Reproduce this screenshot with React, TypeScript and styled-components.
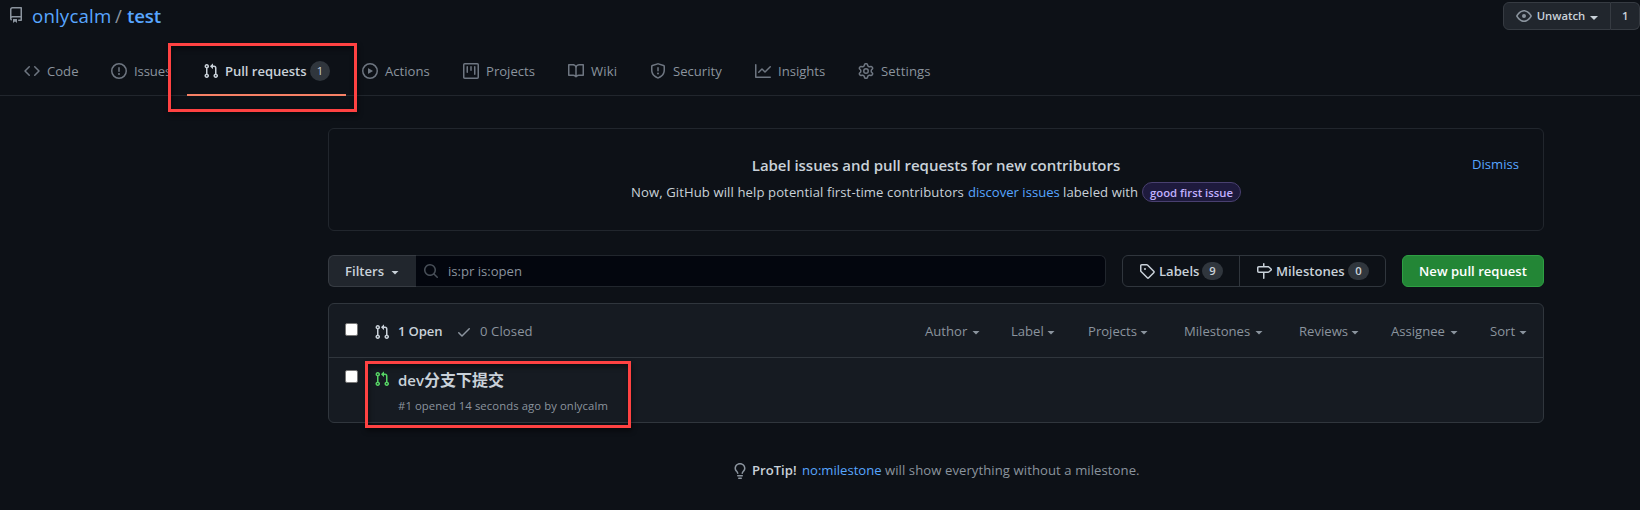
import React from "react";
import styled, { createGlobalStyle } from "styled-components";

const GlobalStyle = createGlobalStyle`
  * { box-sizing: border-box; }
  html, body { margin: 0; background: #0d1117; }
  body {
    height: 510px;
    overflow: hidden;
    color: #c9d1d9;
    font-family: "Open Sans", "Noto Sans", "Noto Sans CJK SC", sans-serif;
    font-size: 13.1px;
    line-height: 20px;
  }
`;

const paths = {
  repo: "M2 2.5A2.5 2.5 0 014.5 0h8.75a.75.75 0 01.75.75v12.5a.75.75 0 01-.75.75h-2.5a.75.75 0 110-1.5h1.75v-2h-8a1 1 0 00-.714 1.7.75.75 0 01-1.072 1.05A2.495 2.495 0 012 11.5v-9zm10.5-1V9h-8c-.356 0-.694.074-1 .208V2.5a1 1 0 011-1h8zM5 12.25v3.25a.25.25 0 00.4.2l1.45-1.087a.25.25 0 01.3 0L8.6 15.7a.25.25 0 00.4-.2v-3.25a.25.25 0 00-.25-.25h-3.5a.25.25 0 00-.25.25z",
  code: "M4.72 3.22a.75.75 0 011.06 1.06L2.06 8l3.72 3.72a.75.75 0 11-1.06 1.06L.47 8.53a.75.75 0 010-1.06l4.25-4.25zm6.56 0a.75.75 0 10-1.06 1.06L13.94 8l-3.72 3.72a.75.75 0 101.06 1.06l4.25-4.25a.75.75 0 000-1.06l-4.25-4.25z",
  issue: "M8 1.5a6.5 6.5 0 100 13 6.5 6.5 0 000-13zM0 8a8 8 0 1116 0A8 8 0 010 8zm9 3a1 1 0 11-2 0 1 1 0 012 0zm-.25-6.25a.75.75 0 00-1.5 0v3.5a.75.75 0 001.5 0v-3.5z",
  pull: "M7.177 3.073L9.573.677A.25.25 0 0110 .854v4.792a.25.25 0 01-.427.177L7.177 3.427a.25.25 0 010-.354zM3.75 2.5a.75.75 0 100 1.5.75.75 0 000-1.5zm-2.25.75a2.25 2.25 0 113 2.122v5.256a2.251 2.251 0 11-1.5 0V5.372A2.25 2.25 0 011.5 3.25zM11 2.5h-1V4h1a1 1 0 011 1v5.628a2.251 2.251 0 101.5 0V5A2.5 2.5 0 0011 2.5zm1 10.25a.75.75 0 111.5 0 .75.75 0 01-1.5 0zM3.75 12a.75.75 0 100 1.5.75.75 0 000-1.5z",
  play: "M1.5 8a6.5 6.5 0 1113 0 6.5 6.5 0 01-13 0zM8 0a8 8 0 100 16A8 8 0 008 0zM6.379 5.227A.25.25 0 006 5.442v5.117a.25.25 0 00.379.214l4.264-2.559a.25.25 0 000-.428L6.379 5.227z",
  project: "M1.75 0A1.75 1.75 0 000 1.75v12.5C0 15.216.784 16 1.75 16h12.5A1.75 1.75 0 0016 14.25V1.75A1.75 1.75 0 0014.25 0H1.75zM1.5 1.75a.25.25 0 01.25-.25h12.5a.25.25 0 01.25.25v12.5a.25.25 0 01-.25.25H1.75a.25.25 0 01-.25-.25V1.75zM11.75 3a.75.75 0 00-.75.75v7.5a.75.75 0 001.5 0v-7.5a.75.75 0 00-.75-.75zm-8.25.75a.75.75 0 011.5 0v5.5a.75.75 0 01-1.5 0v-5.5zM8 3a.75.75 0 00-.75.75v3.5a.75.75 0 001.5 0v-3.5A.75.75 0 008 3z",
  book: "M0 1.75A.75.75 0 01.75 1h4.253c1.227 0 2.317.59 3 1.501A3.744 3.744 0 0111.006 1h4.245a.75.75 0 01.75.75v10.5a.75.75 0 01-.75.75h-4.507a2.25 2.25 0 00-1.591.659l-.622.621a.75.75 0 01-1.06 0l-.622-.621A2.25 2.25 0 005.258 13H.75a.75.75 0 01-.75-.75V1.75zm8.755 3a2.25 2.25 0 012.25-2.25H14.5v9h-3.757c-.71 0-1.4.201-1.992.572l.004-7.322zm-1.504 7.324l.004-5.073-.002-2.253A2.25 2.25 0 005.003 2.5H1.5v9h3.757a3.75 3.75 0 011.994.574z",
  shield: "M7.467.133a1.75 1.75 0 011.066 0l5.25 1.68A1.75 1.75 0 0115 3.48V7c0 1.566-.32 3.182-1.303 4.682-.983 1.498-2.585 2.813-5.032 3.855a1.7 1.7 0 01-1.33 0c-2.447-1.042-4.049-2.357-5.032-3.855C1.32 10.182 1 8.566 1 7V3.48a1.75 1.75 0 011.217-1.667l5.25-1.68zm.61 1.429a.25.25 0 00-.153 0l-5.25 1.68a.25.25 0 00-.174.238V7c0 1.358.275 2.666 1.057 3.86.784 1.194 2.121 2.34 4.366 3.297a.2.2 0 00.154 0c2.245-.956 3.582-2.104 4.366-3.298C13.225 9.666 13.5 8.36 13.5 7V3.48a.25.25 0 00-.174-.237l-5.25-1.68zM9 10.5a1 1 0 11-2 0 1 1 0 012 0zm-.25-5.75a.75.75 0 10-1.5 0v3a.75.75 0 001.5 0v-3z",
  graph: "M1.5 1.75a.75.75 0 00-1.5 0v12.5c0 .414.336.75.75.75h14.5a.75.75 0 000-1.5H1.5V1.75zm14.28 2.53a.75.75 0 00-1.06-1.06L10 7.94 7.53 5.47a.75.75 0 00-1.06 0L3.22 8.72a.75.75 0 001.06 1.06L7 7.06l2.47 2.47a.75.75 0 001.06 0l5.25-5.25z",
  gear: "M7.429 1.525a6.593 6.593 0 011.142 0c.036.003.108.036.137.146l.289 1.105c.147.56.55.967.997 1.189.174.086.341.183.501.29.417.278.97.423 1.53.27l1.102-.303c.11-.03.175.016.195.046.219.31.41.641.573.989.014.031.022.11-.059.19l-.815.806c-.411.406-.562.957-.53 1.456a4.588 4.588 0 010 .582c-.032.499.119 1.05.53 1.456l.815.806c.08.08.073.159.059.19a6.494 6.494 0 01-.573.99c-.02.029-.086.074-.195.045l-1.103-.303c-.559-.153-1.112-.008-1.529.27-.16.107-.327.204-.5.29-.449.222-.851.628-.998 1.189l-.289 1.105c-.029.11-.101.143-.137.146a6.613 6.613 0 01-1.142 0c-.036-.003-.108-.037-.137-.146l-.289-1.105c-.147-.56-.55-.967-.997-1.189a4.502 4.502 0 01-.501-.29c-.417-.278-.97-.423-1.53-.27l-1.102.303c-.11.03-.175-.016-.195-.046a6.492 6.492 0 01-.573-.989c-.014-.031-.022-.11.059-.19l.815-.806c.411-.406.562-.957.53-1.456a4.587 4.587 0 010-.582c.032-.499-.119-1.05-.53-1.456l-.815-.806c-.08-.08-.073-.159-.059-.19a6.44 6.44 0 01.573-.99c.02-.029.086-.075.195-.045l1.103.303c.559.153 1.112.008 1.529-.27.16-.107.327-.204.5-.29.449-.222.851-.628.998-1.189l.289-1.105c.029-.11.101-.143.137-.146zM8 0c-.236 0-.47.01-.701.03-.743.065-1.29.615-1.458 1.261l-.29 1.106c-.017.066-.078.158-.211.224a5.994 5.994 0 00-.668.386c-.123.082-.233.09-.3.071L3.27 2.776c-.644-.177-1.392.02-1.82.63a7.977 7.977 0 00-.704 1.217c-.315.675-.111 1.422.363 1.891l.815.806c.05.048.098.147.088.294a6.084 6.084 0 000 .772c.01.147-.038.246-.088.294l-.815.806c-.474.469-.678 1.216-.363 1.891.2.428.436.835.704 1.218.428.609 1.176.806 1.82.63l1.103-.303c.066-.019.176-.011.299.071.213.143.436.272.668.386.133.066.194.158.212.224l.289 1.106c.169.646.715 1.196 1.458 1.26a8.094 8.094 0 001.402 0c.743-.064 1.29-.614 1.458-1.26l.29-1.106c.017-.066.078-.158.211-.224a5.98 5.98 0 00.668-.386c.123-.082.233-.09.3-.071l1.102.302c.644.177 1.392-.02 1.82-.63.268-.382.505-.789.704-1.217.315-.675.111-1.422-.364-1.891l-.814-.806c-.05-.048-.098-.147-.088-.294a6.1 6.1 0 000-.772c-.01-.147.039-.246.088-.294l.814-.806c.475-.469.679-1.216.364-1.891a7.992 7.992 0 00-.704-1.218c-.428-.609-1.176-.806-1.82-.63l-1.103.303c-.066.019-.176.011-.299-.071a5.991 5.991 0 00-.668-.386c-.133-.066-.194-.158-.212-.224L10.16 1.29C9.99.645 9.444.095 8.701.031A8.094 8.094 0 008 0zm1.5 8a1.5 1.5 0 11-3 0 1.5 1.5 0 013 0zM11 8a3 3 0 11-6 0 3 3 0 016 0z",
  eye: "M1.679 7.932c.412-.621 1.242-1.75 2.366-2.717C5.175 4.242 6.527 3.5 8 3.5c1.473 0 2.824.742 3.955 1.715 1.124.967 1.954 2.096 2.366 2.717a.119.119 0 010 .136c-.412.621-1.242 1.75-2.366 2.717C10.825 11.758 9.473 12.5 8 12.5c-1.473 0-2.824-.742-3.955-1.715C2.92 9.818 2.09 8.69 1.679 8.068a.119.119 0 010-.136zM8 2c-1.981 0-3.67.992-4.933 2.078C1.797 5.169.88 6.423.43 7.1a1.619 1.619 0 000 1.798c.45.678 1.367 1.932 2.637 3.024C4.329 13.008 6.019 14 8 14c1.981 0 3.67-.992 4.933-2.078 1.27-1.091 2.187-2.345 2.637-3.023a1.619 1.619 0 000-1.798c-.45-.678-1.367-1.932-2.637-3.023C11.671 2.992 9.981 2 8 2zm0 8a2 2 0 100-4 2 2 0 000 4z",
  search: "M11.5 7a4.499 4.499 0 11-8.998 0A4.499 4.499 0 0111.5 7zm-.82 4.74a6 6 0 111.06-1.06l3.04 3.04a.75.75 0 11-1.06 1.06l-3.04-3.04z",
  tag: "M2.5 7.775V2.75a.25.25 0 01.25-.25h5.025a.25.25 0 01.177.073l6.25 6.25a.25.25 0 010 .354l-5.025 5.025a.25.25 0 01-.354 0l-6.25-6.25a.25.25 0 01-.073-.177zm-1.5 0V2.75C1 1.784 1.784 1 2.75 1h5.025c.464 0 .91.184 1.238.513l6.25 6.25a1.75 1.75 0 010 2.474l-5.026 5.026a1.75 1.75 0 01-2.474 0l-6.25-6.25A1.75 1.75 0 011 7.775zM6 5a1 1 0 100 2 1 1 0 000-2z",
  milestone: "M7.75 0a.75.75 0 01.75.75V3h3.634c.414 0 .814.147 1.13.414l2.07 1.75a1.75 1.75 0 010 2.672l-2.07 1.75a1.75 1.75 0 01-1.13.414H8.5v5.25a.75.75 0 11-1.5 0V10H2.75A1.75 1.75 0 011 8.25v-3.5C1 3.784 1.784 3 2.75 3H7V.75A.75.75 0 017.75 0zm0 8.5h4.384a.25.25 0 00.161-.06l2.07-1.75a.25.25 0 000-.38l-2.07-1.75a.25.25 0 00-.161-.06H2.75a.25.25 0 00-.25.25v3.5c0 .138.112.25.25.25h5z",
  check: "M13.78 4.22a.75.75 0 010 1.06l-7.25 7.25a.75.75 0 01-1.06 0L2.22 9.28a.75.75 0 011.06-1.06L6 10.94l6.72-6.72a.75.75 0 011.06 0z",
  bulb: "M8 1.5c-2.363 0-4 1.69-4 3.75 0 .984.424 1.625.984 2.304l.214.253c.223.264.47.556.673.848.284.411.537.896.621 1.49a.75.75 0 01-1.484.211c-.04-.282-.163-.547-.37-.847a8.695 8.695 0 00-.542-.68c-.084-.1-.173-.205-.268-.32C3.201 7.75 2.5 6.766 2.5 5.25 2.5 2.31 4.863 0 8 0s5.5 2.31 5.5 5.25c0 1.516-.701 2.5-1.328 3.259-.095.115-.184.22-.268.319-.207.245-.383.453-.541.681-.208.3-.33.565-.37.847a.75.75 0 01-1.485-.212c.084-.593.337-1.078.621-1.489.203-.292.45-.584.673-.848.075-.088.147-.173.213-.253.561-.679.985-1.32.985-2.304 0-2.06-1.637-3.75-4-3.75zM6 15.25a.75.75 0 01.75-.75h2.5a.75.75 0 010 1.5h-2.5a.75.75 0 01-.75-.75zM5.75 12a.75.75 0 000 1.5h4.5a.75.75 0 000-1.5h-4.5z",
};
type IconName = keyof typeof paths;

const Svg = styled.svg<{ $color: string }>`
  flex: none;
  display: block;
  fill: ${(p) => p.$color};
`;
const Icon = ({ name, color = "#8b949e" }: { name: IconName; color?: string }) => (
  <Svg width="16" height="16" viewBox="0 0 16 16" $color={color}>
    <path fillRule="evenodd" d={paths[name]} />
  </Svg>
);

/* A run of text with a reserved width, so neighbours keep their place. */
const Text = styled.span<{ $w?: number; $ls?: number; $size?: number; $bold?: boolean; $color?: string }>`
  flex: none;
  white-space: nowrap;
  width: ${(p) => (p.$w ? `${p.$w}px` : "auto")};
  letter-spacing: ${(p) => p.$ls ?? 0}px;
  font-size: ${(p) => p.$size ?? 13.1}px;
  font-weight: ${(p) => (p.$bold ? 600 : 400)};
  color: ${(p) => p.$color ?? "inherit"};
`;
const Han = styled.span`
  font-family: "Noto Sans CJK SC", sans-serif;
  font-size: 16px;
  font-weight: 700;
  line-height: 18px;
`;

const Caret = styled.i`
  flex: none;
  width: 8px;
  height: 4px;
  margin-top: 4px;
  background: currentColor;
  clip-path: polygon(0 0, 100% 0, 50% 100%);
`;

const Page = styled.div`
  position: relative;
  width: 1640px;
  height: 510px;
  overflow: hidden;
`;

const TopBar = styled.header`
  display: flex;
  justify-content: space-between;
  height: 48px;
  padding: 2px 0 0 8px;
`;
const RepoTitle = styled.h1`
  display: flex;
  align-items: center;
  height: 28px;
  margin: 0;
  font-weight: 400;
`;
const RepoIcon = styled.span`
  margin: -2px 8px 0 0;
`;
const WatchGroup = styled.div`
  display: flex;
  height: 28px;
  color: #c9d1d9;
`;
const WatchButton = styled.button`
  display: flex;
  align-items: center;
  width: 108px;
  padding: 0 0 0 12px;
  border: 1px solid #363b42;
  border-radius: 6px 0 0 6px;
  background: #21262d;
  color: inherit;
  font: inherit;
`;
const WatchMain = styled(WatchButton)`
  gap: 2px;
`;
const WatchCount = styled(WatchButton)`
  width: 29px;
  padding-left: 11px;
  border-left: 0;
  border-radius: 0 6px 6px 0;
`;

const Tabs = styled.nav`
  display: flex;
  height: 48px;
  padding-left: 8px;
  border-bottom: 1px solid #21262d;
`;
const Tab = styled.a<{ $w: number; $active?: boolean }>`
  display: flex;
  align-items: center;
  flex: none;
  gap: ${(p) => (p.$active ? 6 : 7)}px;
  width: ${(p) => p.$w}px;
  height: 48px;
  padding: 0 0 2px 16px;
  color: ${(p) => (p.$active ? "#c9d1d9" : "#8b949e")};
  box-shadow: ${(p) => (p.$active ? "inset 0 -2px #f78166" : "none")};
`;
const Counter = styled.span<{ $tall?: boolean }>`
  flex: none;
  width: ${(p) => (p.$tall ? 20 : 21)}px;
  height: ${(p) => (p.$tall ? 20 : 18)}px;
  margin-left: ${(p) => (p.$tall ? -2 : 0)}px;
  border-radius: 10px;
  background: #30363d;
  color: #c9d1d9;
  text-align: center;
  font-size: 11.3px;
  font-weight: ${(p) => (p.$tall ? 400 : 600)};
  line-height: ${(p) => (p.$tall ? 20 : 18)}px;
`;

const Main = styled.main`
  width: 1216px;
  margin: 32px 0 0 328px;
`;
const Notice = styled.section`
  display: grid;
  grid-template-columns: 1fr auto;
  height: 103px;
  border: 1px solid #21262d;
  border-radius: 6px;
`;
const NoticeBody = styled.div`
  grid-area: 1 / 1 / 2 / 3;
  display: flex;
  flex-direction: column;
  align-items: center;
  padding-top: 24px;
`;
const NoticeTitle = styled.h3`
  margin: 0;
  line-height: 24px;
  font-weight: 600;
  font-size: 15px;
  letter-spacing: -0.04px;
`;
const NoticeLine = styled.div`
  display: flex;
  align-items: center;
  margin-top: 5px;
`;
const Dismiss = styled.div`
  grid-area: 1 / 2;
  padding: 25px 24px 0 0;
  color: #58a6ff;
`;
const IssueLabel = styled.span`
  width: 99px;
  height: 20px;
  border: 1px solid #494070;
  border-radius: 10px;
  background: #1e1a3d;
  color: #c1b1ff;
  text-align: center;
  line-height: 18px;
`;

const Toolbar = styled.div`
  display: flex;
  height: 32px;
  margin-top: 24px;
`;
const FilterButton = styled.button`
  display: flex;
  align-items: center;
  gap: 7px;
  width: 88px;
  padding: 0 0 1px 16px;
  border: 1px solid #363b42;
  border-right: 0;
  border-radius: 6px 0 0 6px;
  background: #21262d;
  color: #c9d1d9;
  font: inherit;
`;
const SearchBox = styled.div`
  display: flex;
  align-items: center;
  gap: 9px;
  width: 690px;
  padding: 0 0 1px 7px;
  border: 1px solid #21262d;
  border-left: 0;
  border-radius: 0 6px 6px 0;
  background: #03060e;
  color: #8b949e;
`;
const LinkGroup = styled.div`
  display: flex;
  width: 264px;
  margin: 0 16px;
  border: 1px solid #30363d;
  border-radius: 6px;
`;
const GroupLink = styled.a<{ $w: number }>`
  display: flex;
  align-items: center;
  gap: 4px;
  width: ${(p) => p.$w}px;
  padding: 0 0 1px 16px;
  & + & { border-left: 1px solid #30363d; }
`;
const NewButton = styled.button`
  width: 142px;
  padding: 0 0 1px;
  border: 1px solid #2ea043;
  border-radius: 6px;
  background: #238636;
  color: #fff;
  font: inherit;
`;

const List = styled.section`
  height: 120px;
  margin-top: 16px;
  border: 1px solid #30363d;
  border-radius: 6px;
  background: #161b22;
`;
const ListHeader = styled.div`
  display: flex;
  align-items: center;
  height: 54px;
  padding: 0 0 0 16px;
  border-bottom: 1px solid #30363d;
  color: #8b949e;
`;
const Check = styled.span<{ $top: number }>`
  flex: none;
  width: 13px;
  height: 13px;
  margin: ${(p) => p.$top}px 16px 0 0;
  border: 1px solid #767676;
  border-radius: 2px;
  background: #fff;
`;
const State = styled.span<{ $w: number; $gap: number }>`
  display: flex;
  align-items: center;
  gap: ${(p) => p.$gap}px;
  width: ${(p) => p.$w}px;

  svg { margin-top: 2px; }
`;
const Menus = styled.div`
  display: grid;
  grid-template-columns: 86px 77px 96px 115px 92px 99px 38px;
  margin-left: auto;
  padding-right: 15px;
`;
const Menu = styled.span`
  display: flex;
  align-items: center;
  gap: 4px;
`;
const Row = styled.div`
  display: flex;
  padding: 12px 0 0 16px;
`;
const RowIcon = styled.span`
  margin: 1px 8px 0 0;
`;
const RowBody = styled.div`
  display: flex;
  flex-direction: column;
  height: 46px;
  justify-content: space-between;
  line-height: 20px;
`;
const ProTip = styled.p`
  display: flex;
  align-items: center;
  justify-content: center;
  height: 20px;
  margin: 37px 0 0;
  color: #8b949e;

  svg { margin: 2px 4px 0 0; }
`;

const Marker = styled.div<{ $x: number; $y: number; $w: number; $h: number }>`
  position: absolute;
  left: ${(p) => p.$x}px;
  top: ${(p) => p.$y}px;
  width: ${(p) => p.$w}px;
  height: ${(p) => p.$h}px;
  border: 3px solid #ff4242;
  box-shadow: 1px 3px 5px rgba(0, 0, 0, 0.45), inset 1px 3px 5px rgba(0, 0, 0, 0.45);
`;

const tabs: { icon: IconName; label: string; w: number; count?: number; ls?: number }[] = [
  { icon: "code", label: "Code", w: 87 },
  { icon: "issue", label: "Issues", w: 92, ls: -0.1 },
  { icon: "pull", label: "Pull requests", w: 159, count: 1, ls: -0.05 },
  { icon: "play", label: "Actions", w: 101 },
  { icon: "project", label: "Projects", w: 105 },
  { icon: "book", label: "Wiki", w: 82, ls: 0.2 },
  { icon: "shield", label: "Security", w: 105 },
  { icon: "graph", label: "Insights", w: 103 },
  { icon: "gear", label: "Settings", w: 100, ls: 0.15 },
];
const menus = [
  { label: "Author", w: 43 },
  { label: "Label", w: 32 },
  { label: "Projects", w: 48 },
  { label: "Milestones", w: 67 },
  { label: "Reviews", w: 48 },
  { label: "Assignee", w: 55 },
  { label: "Sort", w: 25 },
];

export default function App() {
  return (
    <Page>
      <GlobalStyle />
      <TopBar>
        <RepoTitle>
          <RepoIcon><Icon name="repo" /></RepoIcon>
          <Text $size={18.7} $w={83} $ls={0.15} $color="#58a6ff">onlycalm</Text>
          <Text $size={18.7} $w={12} $color="#8b949e">/</Text>
          <Text $size={18.7} $ls={-0.2} $bold $color="#58a6ff">test</Text>
        </RepoTitle>
        <WatchGroup>
          <WatchMain>
            <Icon name="eye" />
            <Text $size={11.3} $w={54} $bold>Unwatch</Text>
            <Caret />
          </WatchMain>
          <WatchCount><Text $size={11.3} $bold>1</Text></WatchCount>
        </WatchGroup>
      </TopBar>
      <Tabs>
        {tabs.map((t) => (
          <Tab key={t.label} $w={t.w} $active={!!t.count}>
            <Icon name={t.icon} color={t.count ? "#c9d1d9" : "#6e7681"} />
            <Text $bold={!!t.count} $w={t.count ? 81 : undefined} $ls={t.ls}>{t.label}</Text>
            {t.count && <Counter $tall>{t.count}</Counter>}
          </Tab>
        ))}
      </Tabs>
      <Main>
        <Notice>
          <NoticeBody>
            <NoticeTitle>Label issues and pull requests for new contributors</NoticeTitle>
            <NoticeLine>
              <Text $w={337} $ls={0.1}>Now, GitHub will help potential first-time contributors</Text>
              <Text $w={95} $color="#58a6ff">discover issues</Text>
              <Text $w={79} $ls={0.08}>labeled with</Text>
              <IssueLabel><Text $size={11.3} $bold>good first issue</Text></IssueLabel>
            </NoticeLine>
          </NoticeBody>
          <Dismiss>Dismiss</Dismiss>
        </Notice>
        <Toolbar>
          <FilterButton><Text $bold $w={39}>Filters</Text><Caret /></FilterButton>
          <SearchBox><Icon name="search" color="#484f58" /><Text>is:pr is:open</Text></SearchBox>
          <LinkGroup>
            <GroupLink $w={116}>
              <Icon name="tag" color="#c9d1d9" />
              <Text $bold $w={39}>Labels</Text>
              <Counter>9</Counter>
            </GroupLink>
            <GroupLink $w={146}>
              <Icon name="milestone" color="#c9d1d9" />
              <Text $bold $w={68}>Milestones</Text>
              <Counter>0</Counter>
            </GroupLink>
          </LinkGroup>
          <NewButton><Text $bold>New pull request</Text></NewButton>
        </Toolbar>
        <List>
          <ListHeader>
            <Check $top={-3} />
            <State $w={82} $gap={8}><Icon name="pull" color="#c9d1d9" /><Text $bold $ls={-0.15} $color="#c9d1d9">1 Open</Text></State>
            <State $w={80} $gap={8}><Icon name="check" /><Text $ls={0.1}>0 Closed</Text></State>
            <Menus>
              {menus.map((m) => (
                <Menu key={m.label}><Text $w={m.w}>{m.label}</Text><Caret /></Menu>
              ))}
            </Menus>
          </ListHeader>
          <Row>
            <Check $top={0} />
            <RowIcon><Icon name="pull" color="#56d364" /></RowIcon>
            <RowBody>
              <Text $size={15} $bold>dev<Han>分支下提交</Han></Text>
              <Text $size={11.3} $ls={0.09} $color="#8b949e">#1 opened 14 seconds ago by onlycalm</Text>
            </RowBody>
          </Row>
        </List>
        <ProTip>
          <Icon name="bulb" />
          <Text $bold $w={50} $color="#c9d1d9">ProTip!</Text>
          <Text $w={83} $color="#58a6ff">no:milestone</Text>
          <Text $w={255} $ls={0.08}>will show everything without a milestone.</Text>
        </ProTip>
      </Main>
      <Marker $x={168} $y={43} $w={189} $h={69} />
      <Marker $x={365} $y={361} $w={266} $h={67} />
    </Page>
  );
}
